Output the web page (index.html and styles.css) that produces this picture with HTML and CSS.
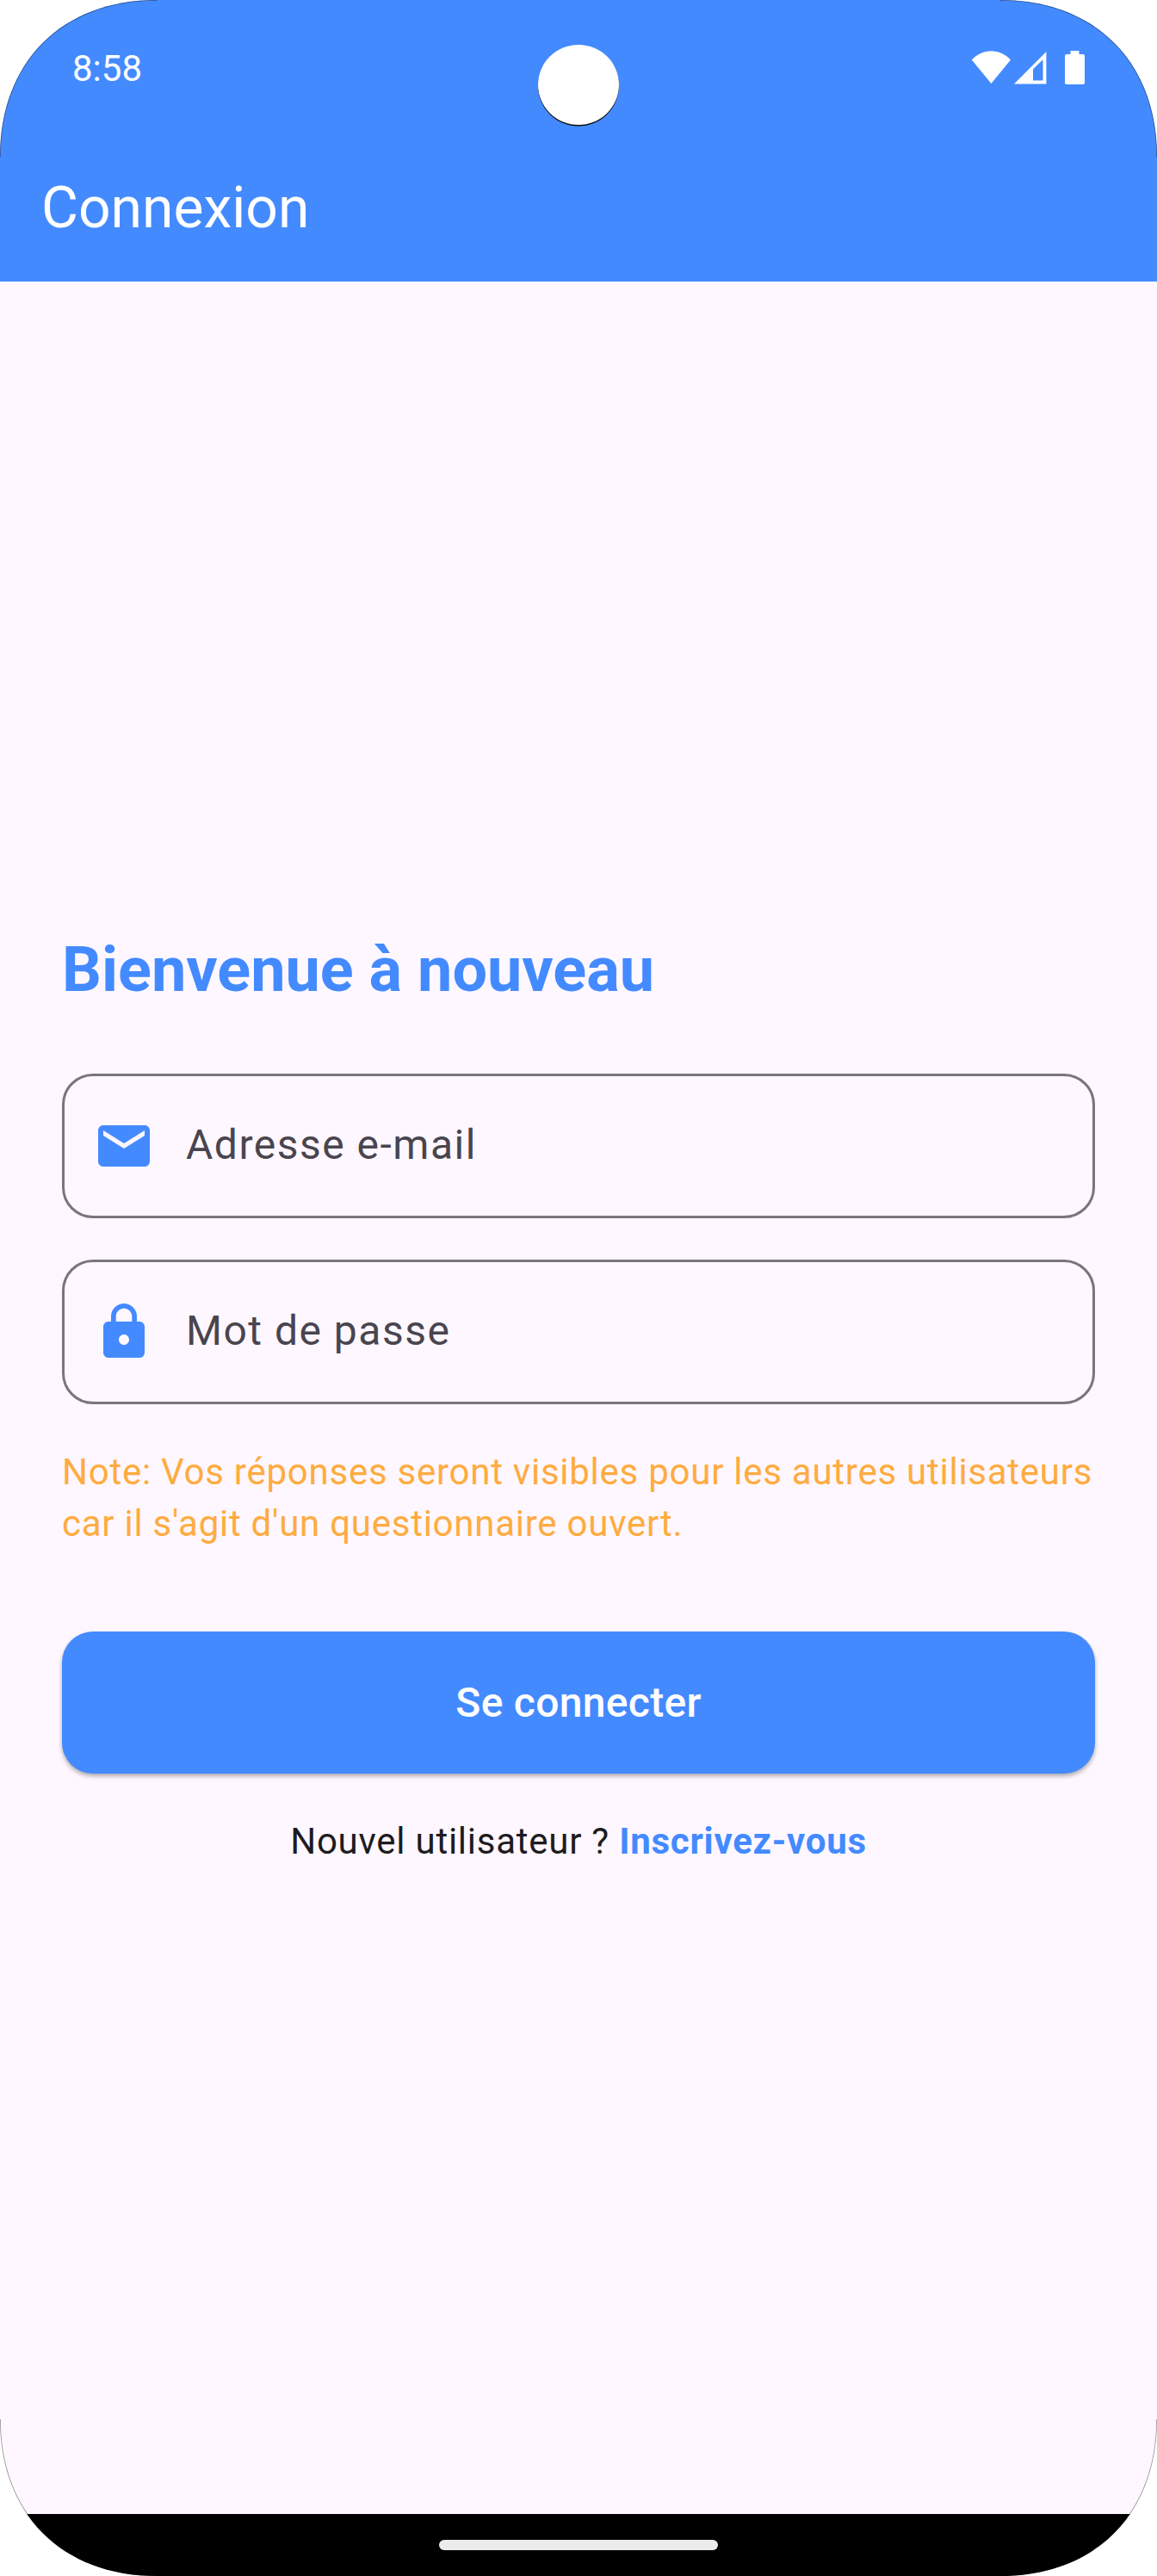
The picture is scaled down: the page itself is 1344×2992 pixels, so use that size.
FILE: index.html
```html
<!DOCTYPE html>
<html lang="fr">
<head>
<meta charset="utf-8">
<title>Connexion</title>
<link rel="stylesheet" href="styles.css">
</head>
<body>
<div class="device">
  <header class="top">
    <div class="status-bar">
      <span class="clock">8:58</span>
      <svg class="status-icons" width="132" height="40" viewBox="0 0 132 40" fill="#fff" aria-hidden="true">
        <path d="M0.8 10.6C6.8 4.2 14.8.3 23.3.3S40.2 4.2 46 10.6L23.4 38Z"/>
        <path fill-rule="evenodd" d="M87.4 1V38.4H50ZM83.5 10.3 72 21.3V34.5H83.5Z"/>
        <path d="M115.5 0H125.5V4H130Q132 4 132 6V37Q132 39 130 39H111Q109 39 109 37V6Q109 4 111 4H115.5Z"/>
      </svg>
    </div>
    <h1 class="title">Connexion</h1>
  </header>
  <main class="content">
    <h2 class="welcome">Bienvenue à nouveau</h2>
    <div class="fields">
      <label class="field">
        <svg class="icon" viewBox="0 0 24 24"><path d="M20 4H4c-1.1 0-1.99.9-1.99 2L2 18c0 1.1.9 2 2 2h16c1.1 0 2-.9 2-2V6c0-1.1-.9-2-2-2zm0 4l-8 5-8-5V6l8 5 8-5v2z"/></svg>
        <span class="label">Adresse e-mail</span>
      </label>
      <label class="field">
        <svg class="icon" viewBox="0 0 24 24"><path d="M18 8h-1V6c0-2.76-2.24-5-5-5S7 3.24 7 6v2H6c-1.1 0-2 .9-2 2v10c0 1.1.9 2 2 2h12c1.1 0 2-.9 2-2V10c0-1.1-.9-2-2-2zm-6 9c-1.1 0-2-.9-2-2s.9-2 2-2 2 .9 2 2-.9 2-2 2zm3.1-9H8.9V6c0-1.71 1.39-3.1 3.1-3.1 1.71 0 3.1 1.39 3.1 3.1v2z"/></svg>
        <span class="label">Mot de passe</span>
      </label>
    </div>
    <p class="note">Note: Vos réponses seront visibles pour les autres utilisateurs car il s'agit d'un questionnaire ouvert.</p>
    <button class="submit" type="button">Se connecter</button>
    <p class="signup">Nouvel utilisateur ? <a class="link">Inscrivez-vous</a></p>
  </main>
  <footer class="nav"><div class="handle"></div></footer>
  <div class="camera"></div>
  <svg class="edge" width="1344" height="2992" viewBox="0 0 1344 2992" fill="none" aria-hidden="true">
    <path d="M0 182C0 72 72 0 182 0M1162 0C1272 0 1344 72 1344 182M1344 2810C1344 2920 1272 2992 1162 2992M182 2992C72 2992 0 2920 0 2810"/>
  </svg>
</div>
</body>
</html>
```
FILE: styles.css
```css
* { box-sizing: border-box; }
body { margin: 0; background: #fff; font-family: Roboto, sans-serif; }
h1, h2, p { margin: 0; }

.device {
  position: relative;
  display: flex;
  flex-direction: column;
  width: 1344px;
  height: 2992px;
  background: #fef7ff;
  clip-path: path("M0 182C0 72 72 0 182 0H1162C1272 0 1344 72 1344 182V2810C1344 2920 1272 2992 1162 2992H182C72 2992 0 2920 0 2810Z");
}

.top { height: 327px; background: #448aff; color: #fff; }
.status-bar {
  display: flex;
  align-items: center;
  justify-content: space-between;
  height: 158px;
  padding: 0 84px;
}
.clock { padding-top: 2px; font-size: 42px; line-height: 50px; }
.status-icons { display: block; }
.title { padding-left: 48px; font-size: 66px; font-weight: 400; line-height: 168px; }

.content {
  flex: 1;
  display: flex;
  flex-direction: column;
  justify-content: center;
  padding: 0 72px;
}
.welcome { color: #448aff; font-size: 72px; font-weight: 700; line-height: 96px; }
.fields { display: grid; gap: 48px; margin-top: 72px; }
.field {
  display: flex;
  align-items: center;
  gap: 36px;
  height: 168px;
  padding-left: 33px;
  border: 3px solid #79747e;
  border-radius: 36px;
  color: #49454f;
  font-size: 48px;
  letter-spacing: 1.5px;
}
.label { padding-bottom: 3px; }
.icon { width: 72px; height: 72px; fill: #448aff; }
.note {
  margin-top: 49px;
  color: #ffab40;
  font-size: 42px;
  line-height: 60px;
  letter-spacing: .75px;
}
.submit {
  height: 165px;
  margin-top: 95px;
  padding: 0;
  border: 0;
  border-radius: 36px;
  background: #448aff;
  box-shadow: 0 3px 5px rgba(0, 0, 0, .32);
  color: #fff;
  font: 500 48px Roboto, sans-serif;
  letter-spacing: .3px;
}
.signup {
  margin: 49px 0 -1px;
  color: #1d1b20;
  font-size: 42px;
  line-height: 60px;
  letter-spacing: .75px;
  text-align: center;
}
.link { color: #448aff; font-weight: 700; }

.nav {
  display: flex;
  align-items: center;
  justify-content: center;
  height: 72px;
  background: #000;
}
.handle { width: 324px; height: 12px; border-radius: 6px; background: #ebebeb; }

.camera {
  position: absolute;
  top: 52px;
  left: 625px;
  width: 94px;
  height: 93px;
  border-radius: 50%;
  background: #fff;
  box-shadow: 0 1.5px 0 #111;
}
.edge { position: absolute; inset: 0; pointer-events: none; }
.edge path { stroke: #000; stroke-opacity: .45; stroke-width: 1.5px; }
```
